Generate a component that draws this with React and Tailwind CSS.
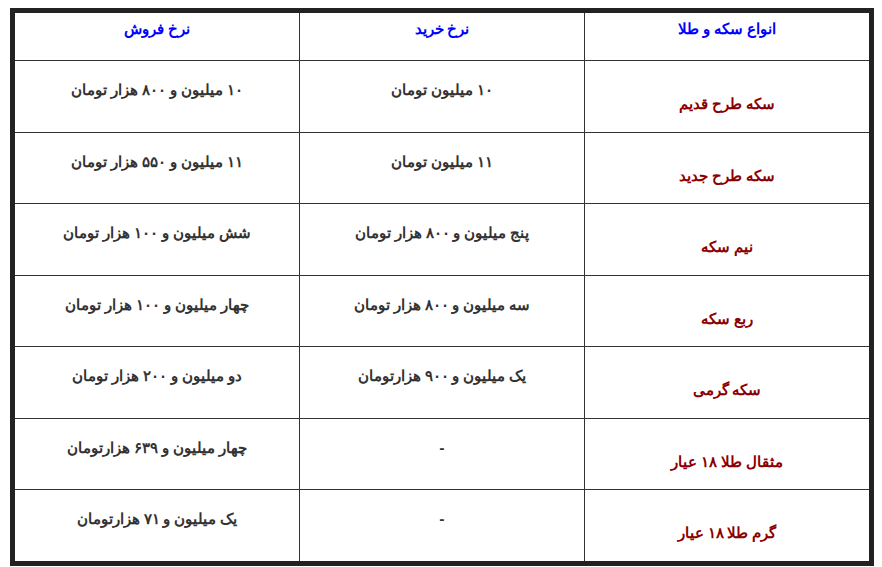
import React from "react";

const rows = [
  ["سکه طرح قدیم", "۱۰ میلیون تومان", "۱۰ میلیون و ۸۰۰ هزار تومان"],
  ["سکه طرح جدید", "۱۱ میلیون تومان", "۱۱ میلیون و ۵۵۰ هزار تومان"],
  ["نیم سکه", "پنج میلیون و ۸۰۰ هزار تومان", "شش میلیون و ۱۰۰ هزار تومان"],
  ["ربع سکه", "سه میلیون و ۸۰۰ هزار تومان", "چهار میلیون و ۱۰۰ هزار تومان"],
  ["سکه گرمی", "یک میلیون و ۹۰۰ هزارتومان", "دو میلیون و ۲۰۰ هزار تومان"],
  ["مثقال طلا ۱۸ عیار", "-", "چهار میلیون و ۶۳۹ هزارتومان"],
  ["گرم طلا ۱۸ عیار", "-", "یک میلیون و ۷۱ هزارتومان"],
];

export default function App() {
  return (
    <div className="w-[882px] h-[567px] bg-white pt-[8px] pl-[10px]" style={{ fontFamily: '"Noto Sans", sans-serif' }}>
      <div dir="rtl" className="w-[864px] h-[558px] border-[5px] border-[#222] flex flex-col">
        <div className="flex h-[48px] border-b border-[#333]">
          {["انواع سکه و طلا", "نرخ خرید", "نرخ فروش"].map((t, i) => (
            <div key={i} className={`flex-1 text-center pt-[4px] text-[15px] font-bold text-[#0000ff] ${i < 2 ? "border-l border-[#333]" : ""}`}>
              {t}
            </div>
          ))}
        </div>
        {rows.map((r, ri) => (
          <div key={ri} className={`flex flex-1 ${ri < rows.length - 1 ? "border-b border-[#333]" : ""}`}>
            <div className="flex-1 text-center pt-[31px] text-[15px] font-bold text-[#8b0000] border-l border-[#333]">{r[0]}</div>
            <div className="flex-1 text-center pt-[17px] text-[15px] font-bold text-[#333] border-l border-[#333]">{r[1]}</div>
            <div className="flex-1 text-center pt-[17px] text-[15px] font-bold text-[#333]">{r[2]}</div>
          </div>
        ))}
      </div>
    </div>
  );
}
